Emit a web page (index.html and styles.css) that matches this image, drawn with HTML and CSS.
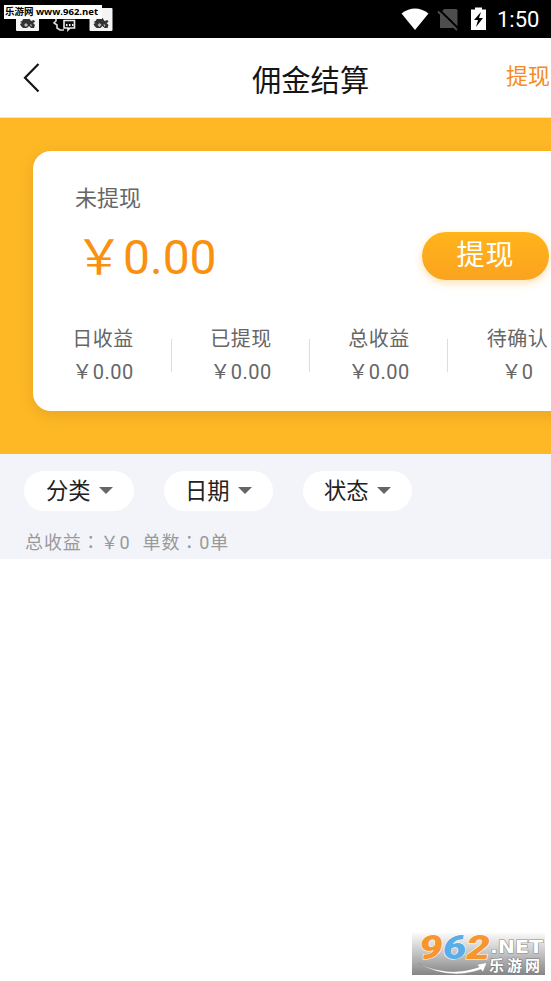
FILE: index.html
```html
<!DOCTYPE html>
<html lang="zh-CN">
<head>
<meta charset="utf-8">
<title>佣金结算</title>
<link rel="stylesheet" href="styles.css">
</head>
<body>
<div class="status">
  <svg class="notices" width="130" height="38" viewBox="0 0 130 38">
    <g id="note"><rect x="16" y="8" width="23" height="23" rx="1" fill="#f4f4f4"/>
    <path d="M20 22l2-1 2-3h5l2 3 3-1 1 2-2 1 2 2-1 3h-3l-2-2-2 2h-4l-2-2-1-2 2-1z" fill="#333"/><path d="M24 25l2-2 2 2-2 2zM30 24l2 1-1 2z" fill="#bbb"/></g>
    <use href="#note" x="73.500"/>
    <path d="M56 17v4l-2 2 3 2v3l3 2h4" fill="none" stroke="#ddd" stroke-width="1.600"/>
    <path d="M64 20.500h10.500v7.500H70l-2 2v-2h-4z" fill="#111" stroke="#eee" stroke-width="1.600"/>
    <path d="M66 24h1.500v2H66zm3 0h1.500v2H69zm3 0h1.500v2H72z" fill="#eee"/>
  </svg>
  <span class="source">乐游网 www.962.net</span>
  <svg class="signals" width="90" height="38" viewBox="400 0 90 38">
    <path d="M401.500 13.500Q415 3.500 428.500 13.500L415 30z" fill="#fff"/>
    <path d="M444 9h12q1.500 0 1.500 1.500V28H440V14z" fill="#4d4d4d"/>
    <path d="M439.500 10L459 29" stroke="#000" stroke-width="2"/>
    <path d="M438 11.500L457 30" stroke="#4d4d4d" stroke-width="1.800"/>
    <path d="M471 9.500h4V7.500h7v2h4V30h-15z" fill="#fff"/>
    <path d="M481 12l-7 8h4l-2 7 7-9h-4z" fill="#000"/>
  </svg>
  <span class="clock">1:50</span>
</div>
<header class="nav">
  <svg class="back" width="20" height="32" viewBox="0 0 20 32"><path d="M16.500 2L3 15.700 16.500 29.500" fill="none" stroke="#151515" stroke-width="2.200"/></svg>
  <h1>佣金结算</h1>
  <a class="record">提现</a>
</header>
<section class="hero">
  <div class="card">
    <div class="label">未提现</div>
    <div class="row"><span class="amount">￥0.00</span><button class="withdraw">提现</button></div>
    <div class="stats">
      <div class="stat"><span>日收益</span><b>￥0.00</b></div>
      <div class="stat"><span>已提现</span><b>￥0.00</b></div>
      <div class="stat"><span>总收益</span><b>￥0.00</b></div>
      <div class="stat"><span>待确认</span><b>￥0</b></div>
    </div>
  </div>
</section>
<section class="filters">
  <div class="pills">
    <div class="pill wide">分类<i></i></div>
    <div class="pill">日期<i></i></div>
    <div class="pill">状态<i></i></div>
  </div>
  <div class="summary"><span>总收益<em lang="zh-TW">：</em>￥0</span><span>单数<em lang="zh-TW">：</em>0单</span></div>
</section>
<div class="mark">
  <svg width="133" height="42" viewBox="0 0 133 42">
    <defs><linearGradient id="g" x2="0" y2="1"><stop stop-color="#fafafa"/><stop offset=".5" stop-color="#c2c2c2"/><stop offset="1" stop-color="#858585"/></linearGradient></defs>
    <rect width="133" height="42" fill="url(#g)"/>
    <text class="digits" x="7" y="26" textLength="71" lengthAdjust="spacingAndGlyphs"><tspan fill="#f7962c">9</tspan><tspan fill="#5aaee8">6</tspan><tspan fill="#f7962c">2</tspan></text>
    <path d="M6 30Q36 45 67 34L65 31.500 75 29.500 71 39 69 36.500Q36 48 6 30z" fill="#fff" stroke="#888" stroke-width=".5"/>
    <text class="net" x="78" y="19.500" textLength="53" lengthAdjust="spacingAndGlyphs">.NET</text>
    <text class="cn" x="77" y="37.500" textLength="51">乐游网</text>
  </svg>
</div>
</body>
</html>
```
FILE: styles.css
```css
* { box-sizing: border-box; }
body { margin: 0; width: 551px; height: 981px; overflow: hidden; position: relative; background: #fff; font-family: Roboto, "Noto Sans CJK SC", sans-serif; color: #222; }
.status { height: 38px; background: #000; display: flex; align-items: center; position: relative; }
.signals { margin-left: 270px; }
.source { position: absolute; left: 4px; top: 5px; width: 98px; height: 14px; background: #fff; color: #000; font: bold 9.500px/14px "Open Sans", "Noto Sans CJK SC", sans-serif; white-space: nowrap; padding-left: 1px; }
.clock { color: #fff; font-size: 22px; line-height: 38px; padding: 2px 0 0 7px; }
.nav { height: 80px; display: flex; align-items: center; border-bottom: 1px solid #f3e6c8; }
.back { margin-left: 22px; flex: none; }
h1 { margin: 6px 0 0 210px; width: 254px; flex: none; font-size: 29.300px; line-height: 40px; font-weight: 400; color: #151515; }
.record { color: #f58a24; font-size: 22px; line-height: 32px; white-space: nowrap; margin-top: -2px; }
.hero { height: 336px; background: #ffb825; padding: 33px 0 0 33px; overflow: hidden; }
.card { width: 560px; height: 260px; background: #fff; border-radius: 18px; box-shadow: 0 4px 16px rgba(130, 100, 40, .2); padding-top: 31px; }
.label { padding-left: 42px; font-size: 22px; line-height: 34px; color: #666; }
.row { display: flex; height: 80px; padding-left: 42px; align-items: center; }
.amount { width: 347px; font-size: 48px; line-height: 70px; color: #fa900f; padding-top: 4px; }
.withdraw { width: 127px; height: 48px; border: 0; border-radius: 24px; background: linear-gradient(#ffb41b, #fba31f); box-shadow: 0 3px 8px rgba(255, 170, 30, .35); color: #fff; font: 28px/44px Roboto, "Noto Sans CJK SC", sans-serif; letter-spacing: 1px; padding: 0; }
.stats { display: flex; padding-top: 27px; margin-left: 1px; }
.stat { width: 138px; height: 66px; flex: none; display: flex; flex-direction: column; align-items: center; line-height: 33px; color: #666; font-size: 20px; letter-spacing: .500px; background: linear-gradient(#ddd, #ddd) right 16px / 1px 33px no-repeat; }
.stat:last-child { background: none; padding-left: 1px; }
.stat b { font-weight: 400; }
.filters { height: 105px; background: #f3f4f9; padding: 17px 0 0 24px; }
.pills { display: flex; gap: 30px; }
.pill { width: 109px; height: 40px; border-radius: 20px; background: #fff; padding-left: 21px; display: flex; align-items: center; font-size: 22.300px; line-height: 38px; color: #222; }
.pill.wide { width: 110px; padding-left: 22px; }
.pill i { margin: 0 0 1px 8px; border: 7px solid transparent; border-top-color: #666; border-bottom: 0; }
.summary { display: flex; gap: 12px; margin: 17px 0 0 1px; font-size: 18px; line-height: 26px; color: #999; letter-spacing: .900px; }
.summary em { font-family: "Noto Sans CJK TC", sans-serif; font-style: normal; }
.mark { position: absolute; left: 412px; top: 933px; }
.mark svg { display: block; overflow: visible; }
.digits { font: italic 900 33px Roboto, sans-serif; stroke: #fff; stroke-width: 1px; paint-order: stroke; }
.net { font: bold 17px "DejaVu Sans", sans-serif; fill: #fff; stroke: #888; stroke-width: 1px; paint-order: stroke; }
.cn { font: bold 15px "Noto Sans CJK SC", sans-serif; fill: #fff; stroke: #777; stroke-width: 1px; paint-order: stroke; }
```
